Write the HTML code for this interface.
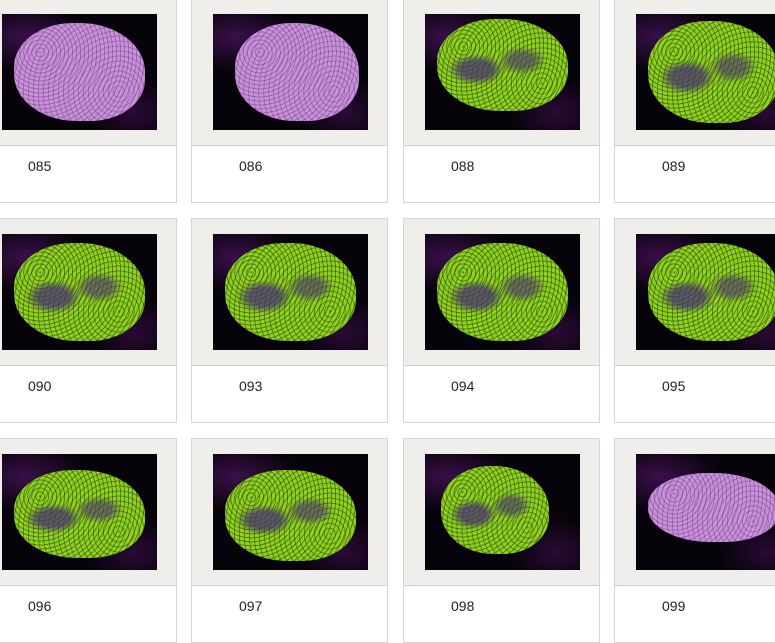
<!DOCTYPE html>
<html><head><style>
body{margin:0;width:775px;height:625px;overflow:hidden;background:#fff;position:relative;font-family:"Liberation Sans",sans-serif}
.c{position:absolute;width:197px;height:205px;border:1px solid #d6d6d6;box-sizing:border-box;background:#fff}
.g{position:absolute;left:0;top:0;right:0;height:146px;background:#efeeea;border-bottom:1px solid #cfcfcf}
.i{position:absolute;left:21px;top:15px;width:155px;height:116px;background:radial-gradient(ellipse 40% 30% at 15% 20%,#3a0f4a,transparent),radial-gradient(ellipse 30% 30% at 85% 85%,#2a0a35,transparent),#07030a;overflow:hidden}
.b{position:absolute;left:8%;top:8%;width:84%;height:84%;border-radius:45% 50% 42% 48%;}
.gr{background:radial-gradient(ellipse at 30% 55%,rgba(70,50,110,.75) 0 12%,transparent 22%),radial-gradient(ellipse at 65% 45%,rgba(70,50,110,.6) 0 10%,transparent 20%),repeating-radial-gradient(circle at 20% 30%,rgba(40,60,20,.55) 0 1px,transparent 1px 4px),repeating-radial-gradient(circle at 80% 70%,rgba(40,60,20,.5) 0 1px,transparent 1px 5px),#8ed21c}
.pu{background:repeating-radial-gradient(circle at 20% 30%,rgba(120,60,150,.5) 0 1px,transparent 1px 4px),repeating-radial-gradient(circle at 80% 70%,rgba(120,60,150,.45) 0 1px,transparent 1px 5px),#c792d6}
.t{position:absolute;left:47px;top:159px;font-size:14px;color:#222}
</style></head><body>
<div class="c" style="left:-20px;top:-2px"><div class="g"><div class="i"><div class="b pu"></div></div></div><div class="t">085</div></div>
<div class="c" style="left:191px;top:-2px"><div class="g"><div class="i"><div class="b pu" style="left:14%;width:80%"></div></div></div><div class="t">086</div></div>
<div class="c" style="left:403px;top:-2px"><div class="g"><div class="i"><div class="b gr" style="top:4%;height:80%"></div></div></div><div class="t">088</div></div>
<div class="c" style="left:614px;top:-2px"><div class="g"><div class="i"><div class="b gr" style="top:6%;height:88%"></div></div></div><div class="t">089</div></div>

<div class="c" style="left:-20px;top:218px"><div class="g"><div class="i"><div class="b gr"></div></div></div><div class="t">090</div></div>
<div class="c" style="left:191px;top:218px"><div class="g"><div class="i"><div class="b gr"></div></div></div><div class="t">093</div></div>
<div class="c" style="left:403px;top:218px"><div class="g"><div class="i"><div class="b gr"></div></div></div><div class="t">094</div></div>
<div class="c" style="left:614px;top:218px"><div class="g"><div class="i"><div class="b gr"></div></div></div><div class="t">095</div></div>

<div class="c" style="left:-20px;top:438px"><div class="g"><div class="i"><div class="b gr" style="top:14%;height:76%"></div></div></div><div class="t">096</div></div>
<div class="c" style="left:191px;top:438px"><div class="g"><div class="i"><div class="b gr" style="top:14%;height:78%"></div></div></div><div class="t">097</div></div>
<div class="c" style="left:403px;top:438px"><div class="g"><div class="i"><div class="b gr" style="left:10%;width:70%;top:10%;height:76%"></div></div></div><div class="t">098</div></div>
<div class="c" style="left:614px;top:438px"><div class="g"><div class="i"><div class="b pu" style="top:16%;height:60%"></div></div></div><div class="t">099</div></div>
</body></html>
